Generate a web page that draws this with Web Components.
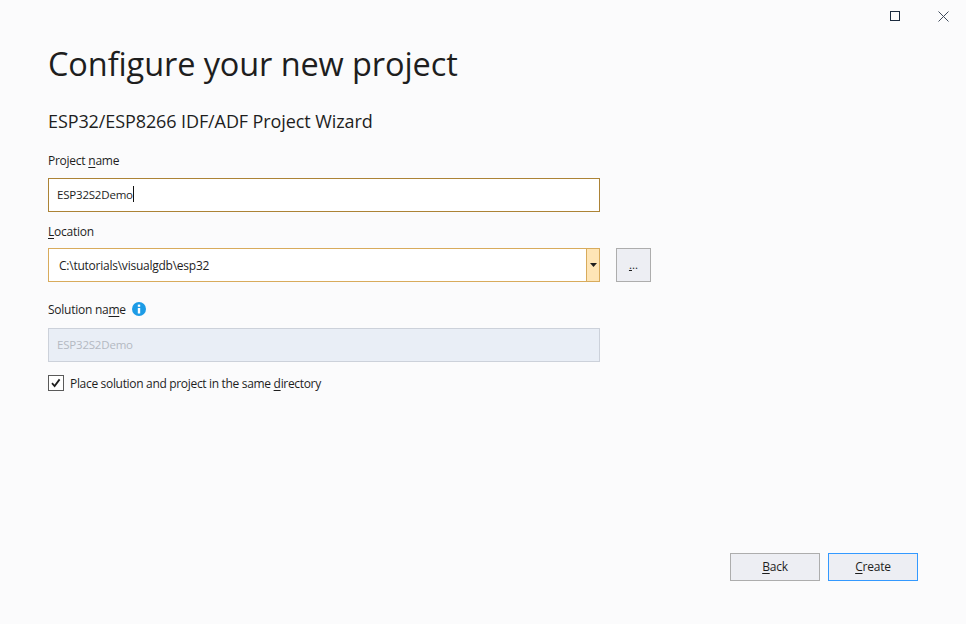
<!DOCTYPE html>
<html lang="en">
<head>
<meta charset="utf-8">
<title>Configure your new project</title>
<style>
  html, body { margin: 0; height: 100%; background: #fbfbfc; }
  body { font-family: "Open Sans", "Noto Sans", sans-serif; color: #1e1e1e; }
  u { text-underline-offset: 2px; }
</style>
</head>
<body>
<wizard-window>
  <span slot="title">Configure your new project</span>
  <span slot="subtitle">ESP32/ESP8266 IDF/ADF Project Wizard</span>

  <form-label style="margin-top:18px;margin-bottom:9px"><span>Project <u>n</u>ame</span></form-label>
  <text-box value="ESP32S2Demo" focused></text-box>

  <form-label style="margin-top:10px;margin-bottom:8px"><span><u>L</u>ocation</span></form-label>
  <combo-row value="C:\tutorials\visualgdb\esp32"></combo-row>

  <form-label style="margin-top:18px;margin-bottom:10px" info><span>Solution na<u>m</u>e</span></form-label>
  <text-box value="ESP32S2Demo" disabled></text-box>

  <check-row checked><span>Place solution and project in the same <u>d</u>irectory</span></check-row>

  <wizard-button slot="actions"><u>B</u>ack</wizard-button>
  <wizard-button slot="actions" primary><u>C</u>reate</wizard-button>
</wizard-window>

<script>
class WizardWindow extends HTMLElement {
  connectedCallback() {
    this.attachShadow({ mode: 'open' });
    this.shadowRoot.innerHTML = `
      <style>
        :host {
          display: flex;
          flex-direction: column;
          height: 624px;
          box-sizing: border-box;
          padding: 0 48px 43px;
          position: relative;
        }
        .controls {
          position: absolute;
          top: 0;
          right: 0;
          display: flex;
          gap: 2px;
        }
        .controls span {
          width: 46px;
          height: 32px;
          display: flex;
          align-items: center;
          justify-content: center;
        }
        h1 {
          margin: 41px 0 0;
          font-size: 32.5px;
          line-height: 46px;
          font-weight: 400;
          color: #1e1e1e;
          letter-spacing: -0.1px;
        }
        h2 {
          margin: 22px 0 0;
          font-size: 18px;
          line-height: 24px;
          font-weight: 400;
          color: #1e1e1e;
          letter-spacing: -0.1px;
        }
        .form {
          display: flex;
          flex-direction: column;
          width: 603px;
          flex: 1;
        }
        .actions {
          display: flex;
          justify-content: flex-end;
          gap: 8px;
        }
      </style>
      <div class="controls">
        <span><svg width="10" height="10" viewBox="0 0 10 10"><rect x=".5" y=".5" width="9" height="9" fill="none" stroke="#1b2a3e"/></svg></span>
        <span><svg width="11" height="11" viewBox="0 0 11 11"><path d="M.5.5l10 10M10.5.5l-10 10" fill="none" stroke="#3f4b5c" stroke-width="1"/></svg></span>
      </div>
      <h1><slot name="title"></slot></h1>
      <h2><slot name="subtitle"></slot></h2>
      <div class="form"><slot></slot></div>
      <div class="actions"><slot name="actions"></slot></div>
    `;
  }
}

class FormLabel extends HTMLElement {
  connectedCallback() {
    const info = this.hasAttribute('info') ? `
      <svg width="14" height="14" viewBox="0 0 14 14">
        <circle cx="7" cy="7" r="7" fill="#1c9be6"/>
        <rect x="5.8" y="6" width="2.4" height="5.5" fill="#fff"/>
        <rect x="5.8" y="2.6" width="2.4" height="2.2" fill="#fff"/>
      </svg>` : '';
    this.attachShadow({ mode: 'open' });
    this.shadowRoot.innerHTML = `
      <style>
        :host {
          display: flex;
          align-items: center;
          gap: 6px;
          height: 18px;
          font-size: 12px;
          letter-spacing: -0.25px;
          color: #1e1e1e;
        }
        svg { display: block; }
      </style>
      <slot></slot>${info}
    `;
  }
}

class TextBox extends HTMLElement {
  connectedCallback() {
    const caret = this.hasAttribute('focused') ? '<i></i>' : '';
    this.attachShadow({ mode: 'open' });
    this.shadowRoot.innerHTML = `
      <style>
        :host {
          display: flex;
          align-items: center;
          width: 552px;
          height: 34px;
          box-sizing: border-box;
          padding: 0 8px 2px;
          background: #fff;
          border: 1px solid #ccced3;
          font-size: 11.5px;
          letter-spacing: -0.2px;
          color: #1e1e1e;
        }
        :host([focused]) { border-color: #ac8336; }
        :host([disabled]) {
          background: #e9eef6;
          border-color: #ccd1da;
          color: #b4b9c2;
        }
        i {
          display: block;
          width: 1px;
          height: 16px;
          background: #111;
        }
      </style>
      <span>${this.getAttribute('value')}</span>${caret}
    `;
  }
}

class ComboRow extends HTMLElement {
  connectedCallback() {
    this.attachShadow({ mode: 'open' });
    this.shadowRoot.innerHTML = `
      <style>
        :host {
          display: flex;
          gap: 16px;
          height: 34px;
        }
        .combo {
          display: flex;
          width: 552px;
          box-sizing: border-box;
          background: #fff;
          border: 1px solid #d8ab5c;
        }
        .value {
          flex: 1;
          display: flex;
          align-items: center;
          padding: 0 10px;
          font-size: 12px;
          letter-spacing: -0.24px;
          color: #1e1e1e;
        }
        .arrow {
          width: 12px;
          border-left: 1px solid #d8ab5c;
          background: #fee5b6;
          display: flex;
          align-items: center;
          justify-content: center;
        }
        .browse {
          width: 35px;
          box-sizing: border-box;
          background: #edeef3;
          border: 1px solid #adadad;
          display: flex;
          align-items: flex-end;
          justify-content: center;
          padding-bottom: 9px;
          font-size: 11.5px;
          line-height: 14px;
          color: #1e1e1e;
        }
        svg { display: block; }
      </style>
      <div class="combo">
        <div class="value">${this.getAttribute('value')}</div>
        <div class="arrow"><svg width="7" height="4" viewBox="0 0 7 4"><path d="M0 0h7L3.5 4z" fill="#1e1e1e"/></svg></div>
      </div>
      <div class="browse"><span><u>.</u>..</span></div>
    `;
  }
}

class CheckRow extends HTMLElement {
  connectedCallback() {
    this.attachShadow({ mode: 'open' });
    this.shadowRoot.innerHTML = `
      <style>
        :host {
          display: flex;
          align-items: center;
          gap: 6px;
          margin-top: 12px;
          height: 18px;
          font-size: 12px;
          letter-spacing: -0.32px;
          color: #1e1e1e;
        }
        svg { display: block; }
      </style>
      <svg width="16" height="16" viewBox="0 0 16 16">
        <rect x=".5" y=".5" width="15" height="15" fill="#fff" stroke="#5a5a5a"/>
        <path d="M4 8.2l2.6 2.8 5-6.6" fill="none" stroke="#1e1e1e" stroke-width="1.8"/>
      </svg>
      <slot></slot>
    `;
  }
}

class WizardButton extends HTMLElement {
  connectedCallback() {
    this.attachShadow({ mode: 'open' });
    this.shadowRoot.innerHTML = `
      <style>
        :host {
          display: flex;
          align-items: center;
          justify-content: center;
          width: 90px;
          height: 28px;
          box-sizing: border-box;
          padding-bottom: 1px;
          background: #edeef3;
          border: 1px solid #adadad;
          font-size: 12px;
          letter-spacing: -0.2px;
          color: #1e1e1e;
        }
        :host([primary]) { border-color: #3399ff; }
      </style>
      <slot></slot>
    `;
  }
}

customElements.define('wizard-window', WizardWindow);
customElements.define('form-label', FormLabel);
customElements.define('text-box', TextBox);
customElements.define('combo-row', ComboRow);
customElements.define('check-row', CheckRow);
customElements.define('wizard-button', WizardButton);
</script>
</body>
</html>
